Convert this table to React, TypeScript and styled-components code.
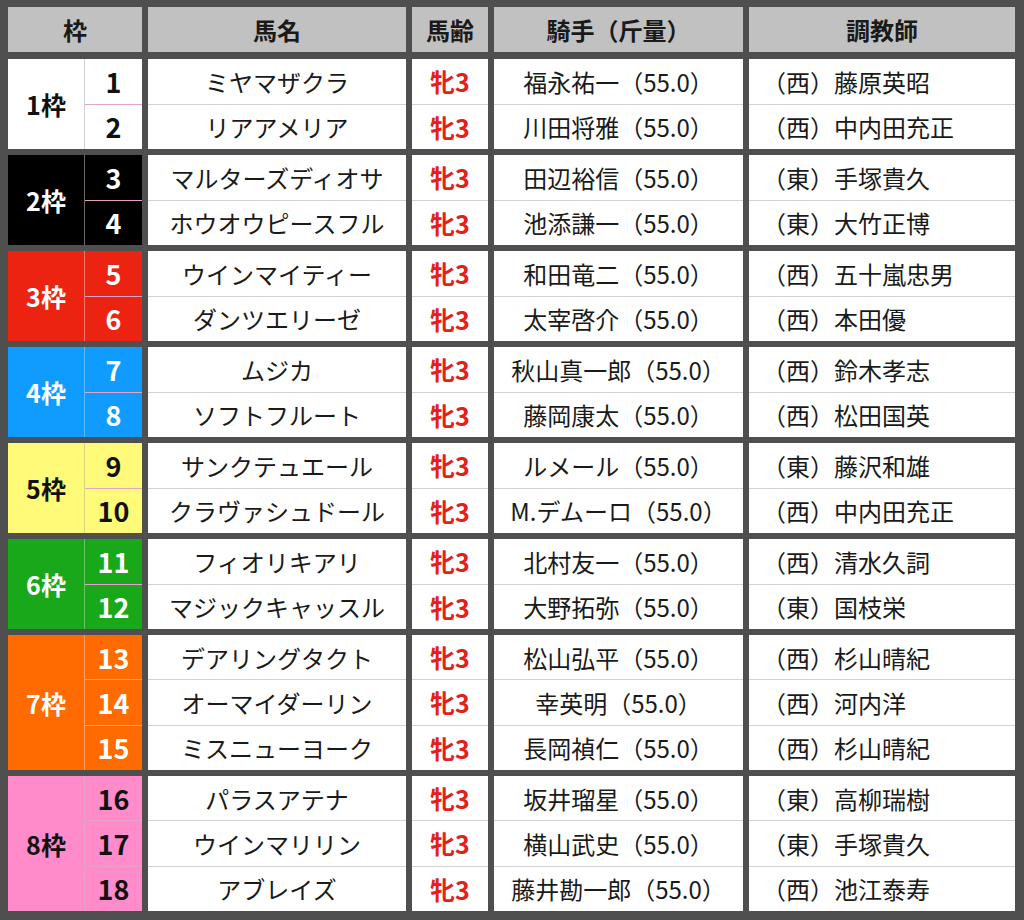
import React from "react";
import styled, { createGlobalStyle } from "styled-components";

const GlobalStyle = createGlobalStyle`
  html, body { margin: 0; padding: 0; background: #ffffff; }
  body { font-family: "Noto Sans CJK JP", "Noto Sans", sans-serif; }
`;

type Horse = { no: number; name: string; jockey: string; trainer: string };
type Frame = {
  frame: number;
  bg: string;
  fg: string;
  line: string;
  horses: Horse[];
};

const frames: Frame[] = [
  {
    frame: 1, bg: "#ffffff", fg: "#111111", line: "#d2d2d2",
    horses: [
      { no: 1, name: "ミヤマザクラ", jockey: "福永祐一（55.0）", trainer: "（西）藤原英昭" },
      { no: 2, name: "リアアメリア", jockey: "川田将雅（55.0）", trainer: "（西）中内田充正" },
    ],
  },
  {
    frame: 2, bg: "#000000", fg: "#ffffff", line: "#6a6a6a",
    horses: [
      { no: 3, name: "マルターズディオサ", jockey: "田辺裕信（55.0）", trainer: "（東）手塚貴久" },
      { no: 4, name: "ホウオウピースフル", jockey: "池添謙一（55.0）", trainer: "（東）大竹正博" },
    ],
  },
  {
    frame: 3, bg: "#ec2311", fg: "#ffffff", line: "#f2776a",
    horses: [
      { no: 5, name: "ウインマイティー", jockey: "和田竜二（55.0）", trainer: "（西）五十嵐忠男" },
      { no: 6, name: "ダンツエリーゼ", jockey: "太宰啓介（55.0）", trainer: "（西）本田優" },
    ],
  },
  {
    frame: 4, bg: "#109cff", fg: "#ffffff", line: "#5cbcff",
    horses: [
      { no: 7, name: "ムジカ", jockey: "秋山真一郎（55.0）", trainer: "（西）鈴木孝志" },
      { no: 8, name: "ソフトフルート", jockey: "藤岡康太（55.0）", trainer: "（西）松田国英" },
    ],
  },
  {
    frame: 5, bg: "#fffb78", fg: "#111111", line: "#d9d57a",
    horses: [
      { no: 9, name: "サンクテュエール", jockey: "ルメール（55.0）", trainer: "（東）藤沢和雄" },
      { no: 10, name: "クラヴァシュドール", jockey: "M.デムーロ（55.0）", trainer: "（西）中内田充正" },
    ],
  },
  {
    frame: 6, bg: "#1aa81b", fg: "#ffffff", line: "#66c466",
    horses: [
      { no: 11, name: "フィオリキアリ", jockey: "北村友一（55.0）", trainer: "（西）清水久詞" },
      { no: 12, name: "マジックキャッスル", jockey: "大野拓弥（55.0）", trainer: "（東）国枝栄" },
    ],
  },
  {
    frame: 7, bg: "#ff6b00", fg: "#ffffff", line: "#ff9d5c",
    horses: [
      { no: 13, name: "デアリングタクト", jockey: "松山弘平（55.0）", trainer: "（西）杉山晴紀" },
      { no: 14, name: "オーマイダーリン", jockey: "幸英明（55.0）", trainer: "（西）河内洋" },
      { no: 15, name: "ミスニューヨーク", jockey: "長岡禎仁（55.0）", trainer: "（西）杉山晴紀" },
    ],
  },
  {
    frame: 8, bg: "#ff8bcb", fg: "#111111", line: "#e7a2c8",
    horses: [
      { no: 16, name: "パラスアテナ", jockey: "坂井瑠星（55.0）", trainer: "（東）高柳瑞樹" },
      { no: 17, name: "ウインマリリン", jockey: "横山武史（55.0）", trainer: "（東）手塚貴久" },
      { no: 18, name: "アブレイズ", jockey: "藤井勘一郎（55.0）", trainer: "（西）池江泰寿" },
    ],
  },
];

const COLS = "134px 258px 76px 249px 266px";
const ROW_H = 45;

const Table = styled.div`
  width: 1024px;
  height: 920px;
  box-sizing: border-box;
  background: #4f4f4f;
  padding: 7px 9px 9px 8px;
  display: flex;
  flex-direction: column;
  gap: 6px;
`;

const HeaderRow = styled.div`
  display: grid;
  grid-template-columns: ${COLS};
  column-gap: 6px;
  height: 45px;
  margin-bottom: 1px;
`;

const HeaderCell = styled.div`
  background: #c1c1c1;
  color: #1a1a1a;
  font-size: 24px;
  font-weight: 700;
  display: flex;
  align-items: center;
  justify-content: center;
`;

const Group = styled.div<{ $rows: number }>`
  display: grid;
  grid-template-columns: ${COLS};
  column-gap: 6px;
  height: ${(p) => p.$rows * ROW_H}px;
`;

const FrameBlock = styled.div<{ $bg: string; $fg: string }>`
  display: grid;
  grid-template-columns: 77px 1fr;
  background: ${(p) => p.$bg};
  color: ${(p) => p.$fg};
`;

const FrameLabel = styled.div<{ $line: string }>`
  border-right: 1px solid ${(p) => p.$line};
  display: flex;
  align-items: center;
  justify-content: center;
  font-size: 25px;
  font-weight: 700;
`;

const NumberStack = styled.div`
  display: flex;
  flex-direction: column;
`;

const NumberCell = styled.div<{ $line: string }>`
  flex: 1;
  box-sizing: border-box;
  display: flex;
  align-items: center;
  justify-content: center;
  font-size: 27px;
  font-weight: 700;
  & + & {
    border-top: 1px solid ${(p) => p.$line};
  }
`;

const Column = styled.div`
  display: flex;
  flex-direction: column;
  background: #ffffff;
`;

const Cell = styled.div<{ $align?: "center" | "left"; $red?: boolean }>`
  flex: 1;
  box-sizing: border-box;
  display: flex;
  align-items: center;
  justify-content: ${(p) => (p.$align === "left" ? "flex-start" : "center")};
  padding-left: ${(p) => (p.$align === "left" ? "13px" : "0")};
  font-size: ${(p) => (p.$red ? "25px" : "24px")};
  font-weight: ${(p) => (p.$red ? 700 : 400)};
  color: ${(p) => (p.$red ? "#e3211a" : "#1a1a1a")};
  white-space: nowrap;
  & + & {
    border-top: 1px solid #d2d2d2;
  }
`;

export default function App() {
  return (
    <>
      <GlobalStyle />
      <Table>
        <HeaderRow>
          <HeaderCell>枠</HeaderCell>
          <HeaderCell>馬名</HeaderCell>
          <HeaderCell>馬齢</HeaderCell>
          <HeaderCell>騎手（斤量）</HeaderCell>
          <HeaderCell>調教師</HeaderCell>
        </HeaderRow>
        {frames.map((f) => (
          <Group key={f.frame} $rows={f.horses.length}>
            <FrameBlock $bg={f.bg} $fg={f.fg}>
              <FrameLabel $line={f.line}>{f.frame}枠</FrameLabel>
              <NumberStack>
                {f.horses.map((h) => (
                  <NumberCell key={h.no} $line={f.line}>
                    {h.no}
                  </NumberCell>
                ))}
              </NumberStack>
            </FrameBlock>
            <Column>
              {f.horses.map((h) => (
                <Cell key={h.no}>{h.name}</Cell>
              ))}
            </Column>
            <Column>
              {f.horses.map((h) => (
                <Cell key={h.no} $red>
                  牝3
                </Cell>
              ))}
            </Column>
            <Column>
              {f.horses.map((h) => (
                <Cell key={h.no}>{h.jockey}</Cell>
              ))}
            </Column>
            <Column>
              {f.horses.map((h) => (
                <Cell key={h.no} $align="left">
                  {h.trainer}
                </Cell>
              ))}
            </Column>
          </Group>
        ))}
      </Table>
    </>
  );
}
